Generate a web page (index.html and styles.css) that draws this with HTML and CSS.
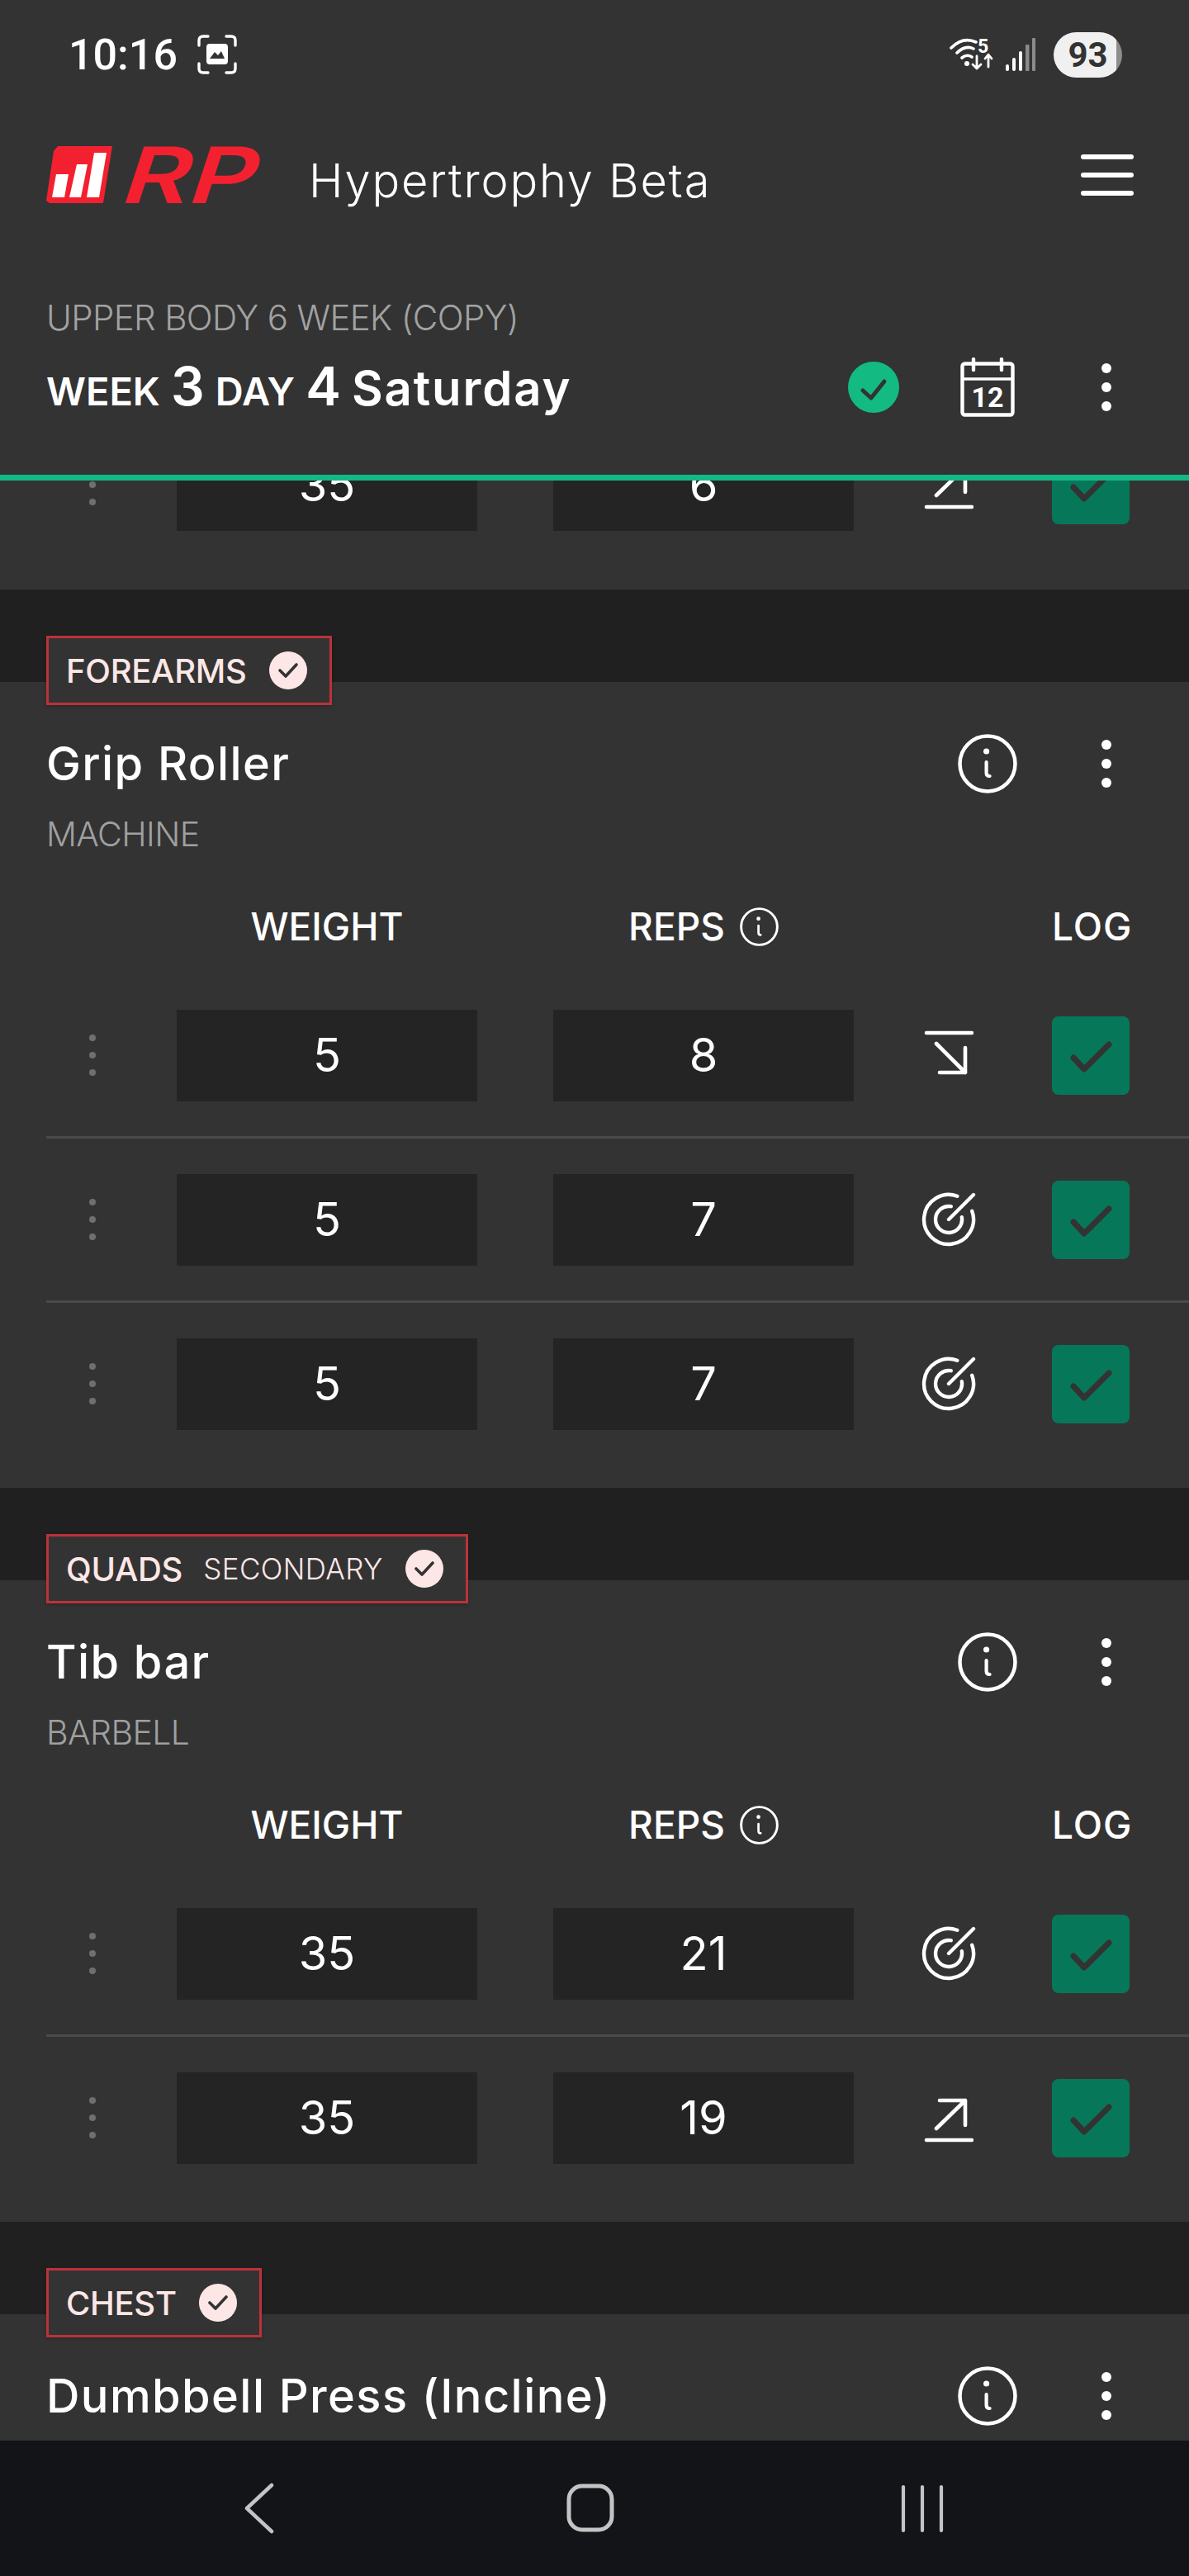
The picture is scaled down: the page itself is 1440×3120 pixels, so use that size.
FILE: index.html

```html
<!DOCTYPE html>
<html lang="en">
<head>
  <meta charset="UTF-8">
  <title>RP Hypertrophy Beta</title>
  <meta name="viewport" content="width=device-width, initial-scale=1">
  <link rel="stylesheet" href="styles.css">
</head>
<body>
  <svg class="defs" width="0" height="0">
    <symbol id="info" viewBox="0 0 72 72">
      <circle cx="36" cy="36" r="33.5" fill="none" stroke="currentColor" stroke-width="4.5"/>
      <circle cx="34.6" cy="21" r="3.6" fill="currentColor"/>
      <path d="M34.6 34V47Q34.6 51 38.6 51" fill="none" stroke="currentColor" stroke-width="4.2" stroke-linecap="round"/>
    </symbol>
    <symbol id="kebab" viewBox="0 0 14 60">
      <circle cx="7" cy="7" r="6" fill="currentColor"/>
      <circle cx="7" cy="30" r="6" fill="currentColor"/>
      <circle cx="7" cy="53" r="6" fill="currentColor"/>
    </symbol>
    <symbol id="grip" viewBox="0 0 10 52">
      <circle cx="5" cy="5" r="4" fill="currentColor"/>
      <circle cx="5" cy="26" r="4" fill="currentColor"/>
      <circle cx="5" cy="47" r="4" fill="currentColor"/>
    </symbol>
    <symbol id="trend-down" viewBox="0 0 60 64">
      <path d="M3 5H58M15 18L50 53M50 23V53H19" fill="none" stroke="currentColor" stroke-width="4.6" stroke-linecap="round" stroke-linejoin="round"/>
    </symbol>
    <symbol id="trend-up" viewBox="0 0 60 64">
      <path d="M3 59H58M15 45L50 11M50 41V11H19" fill="none" stroke="currentColor" stroke-width="4.6" stroke-linecap="round" stroke-linejoin="round"/>
    </symbol>
    <symbol id="target" viewBox="0 0 66 66">
      <path d="M61.2 22.7A30 30 0 1 1 43.3 4.8M48.8 30.2A16 16 0 1 1 35.8 17.2M33 33L63 3" fill="none" stroke="currentColor" stroke-width="4.4" stroke-linecap="round"/>
    </symbol>
    <symbol id="box-check" viewBox="0 0 94 95">
      <path d="M26 50L39 64L69 34" fill="none" stroke="currentColor" stroke-width="7" stroke-linecap="round" stroke-linejoin="round"/>
    </symbol>
    <symbol id="tag-check" viewBox="0 0 46 46">
      <circle cx="23" cy="23" r="23" fill="#fde7e6"/>
      <path d="M13 23L20 30L33 16" fill="none" stroke="#333" stroke-width="3.6" stroke-linecap="round" stroke-linejoin="round"/>
    </symbol>
  </svg>

  <div class="app">
    <header class="top">
      <div class="status">
        <div class="status-left">
          <span class="time">10:16</span>
          <svg class="shot" width="48" height="48" viewBox="0 0 48 48">
            <path d="M2 13V7Q2 2 7 2H13M35 2H41Q46 2 46 7V13M46 35V41Q46 46 41 46H35M13 46H7Q2 46 2 41V35" fill="none" stroke="#fff" stroke-width="3.4" stroke-linecap="round"/>
            <rect x="11" y="11" width="26" height="25" rx="4" fill="#fff"/>
            <path d="M15 29L21 21L25 25L29 20L33 29Z" fill="#333"/>
          </svg>
        </div>
        <div class="status-right">
          <svg width="54" height="60" viewBox="0 -10 54 60">
            <path d="M2 12Q16 -2 32 5M9 18Q19 8 29 13M15 24Q21 19 27 23" fill="none" stroke="#fff" stroke-width="3.6" stroke-linecap="round"/>
            <circle cx="21" cy="31" r="3" fill="#fff"/>
            <text x="34" y="18" class="wifi-five">5</text>
            <path d="M33 22V37M28 32L33 37L38 32M47 35V21M43 25L47 20L51 25" fill="none" stroke="#fff" stroke-width="2.8" stroke-linecap="round" stroke-linejoin="round"/>
          </svg>
          <svg class="signal" width="36" height="40" viewBox="0 0 36 40">
            <rect x="0" y="32" width="4" height="8" rx="2" fill="#fff"/>
            <rect x="8" y="24" width="4" height="16" rx="2" fill="#fff"/>
            <rect x="16" y="16" width="4" height="24" rx="2" fill="#fff"/>
            <rect x="24" y="8" width="4.5" height="32" rx="1" fill="#8b8b8b"/>
            <rect x="32" y="0" width="4" height="40" rx="1" fill="#8b8b8b"/>
          </svg>
          <span class="battery">93</span>
        </div>
      </div>

      <div class="brand">
        <div class="logo">
          <svg width="80" height="70" viewBox="0 0 80 70">
            <path d="M14 0H80L79 6L69 69H4L0 66L9 6Z" fill="#f3212f"/>
            <path d="M12 34H27L22 62H7ZM37 22H50L42 62H28ZM58 8H73L64 62H49Z" fill="#fff"/>
          </svg>
          <span class="logo-text">RP</span>
        </div>
        <span class="app-name">Hypertrophy Beta</span>
        <div class="menu"><i></i><i></i><i></i></div>
      </div>

      <div class="program">UPPER BODY 6 WEEK (COPY)</div>
      <div class="day-row">
        <div class="day-title">
          <span class="small">WEEK</span> <span class="big">3</span> <span class="small">DAY</span> <span class="big">4</span> <span class="weekday">Saturday</span>
        </div>
        <svg class="done" width="62" height="62" viewBox="0 0 62 62">
          <circle cx="31" cy="31" r="31" fill="#13bb82"/>
          <path d="M18 35L28 44L44 24" fill="none" stroke="#333" stroke-width="5" stroke-linecap="round" stroke-linejoin="round"/>
        </svg>
        <svg class="calendar" width="66" height="72" viewBox="0 0 66 72">
          <rect x="2.5" y="7.5" width="61" height="62" rx="3" fill="none" stroke="#fff" stroke-width="4.4"/>
          <path d="M2 26H64" stroke="#fff" stroke-width="3.6"/>
          <path d="M16 2V15M50 2V15" stroke="#fff" stroke-width="4.4" stroke-linecap="round"/>
          <text x="33" y="60" class="cal-num">12</text>
        </svg>
        <svg class="kebab" width="14" height="60"><use href="#kebab"/></svg>
      </div>
    </header>

    <main class="list">
      <section class="card card-cut">
        <div class="row row-cut">
          <svg class="grip" width="10" height="52"><use href="#grip"/></svg>
          <div class="cell">35</div>
          <div class="cell">6</div>
          <div class="trend"><svg width="60" height="64"><use href="#trend-up"/></svg></div>
          <div class="log"><svg width="94" height="95"><use href="#box-check"/></svg></div>
        </div>
      </section>

      <section class="group">
        <div class="tag"><span class="tag-name">FOREARMS</span><svg width="46" height="46"><use href="#tag-check"/></svg></div>
        <div class="card">
          <div class="ex-head">
            <h2 class="ex-name">Grip Roller</h2>
            <svg class="ex-info" width="72" height="72"><use href="#info"/></svg>
            <svg class="kebab" width="14" height="60"><use href="#kebab"/></svg>
          </div>
          <div class="ex-type">MACHINE</div>
          <div class="labels">
            <span class="lab-weight">WEIGHT</span>
            <span class="lab-reps">REPS <svg width="47" height="47"><use href="#info"/></svg></span>
            <span class="lab-log">LOG</span>
          </div>
          <div class="row line">
            <svg class="grip" width="10" height="52"><use href="#grip"/></svg>
            <div class="cell">5</div>
            <div class="cell">8</div>
            <div class="trend"><svg width="60" height="64"><use href="#trend-down"/></svg></div>
            <div class="log"><svg width="94" height="95"><use href="#box-check"/></svg></div>
          </div>
          <div class="row line">
            <svg class="grip" width="10" height="52"><use href="#grip"/></svg>
            <div class="cell">5</div>
            <div class="cell">7</div>
            <div class="trend"><svg width="66" height="66"><use href="#target"/></svg></div>
            <div class="log"><svg width="94" height="95"><use href="#box-check"/></svg></div>
          </div>
          <div class="row">
            <svg class="grip" width="10" height="52"><use href="#grip"/></svg>
            <div class="cell">5</div>
            <div class="cell">7</div>
            <div class="trend"><svg width="66" height="66"><use href="#target"/></svg></div>
            <div class="log"><svg width="94" height="95"><use href="#box-check"/></svg></div>
          </div>
        </div>
      </section>

      <section class="group">
        <div class="tag"><span class="tag-name">QUADS</span><span class="tag-sub">SECONDARY</span><svg width="46" height="46"><use href="#tag-check"/></svg></div>
        <div class="card">
          <div class="ex-head">
            <h2 class="ex-name">Tib bar</h2>
            <svg class="ex-info" width="72" height="72"><use href="#info"/></svg>
            <svg class="kebab" width="14" height="60"><use href="#kebab"/></svg>
          </div>
          <div class="ex-type">BARBELL</div>
          <div class="labels">
            <span class="lab-weight">WEIGHT</span>
            <span class="lab-reps">REPS <svg width="47" height="47"><use href="#info"/></svg></span>
            <span class="lab-log">LOG</span>
          </div>
          <div class="row line">
            <svg class="grip" width="10" height="52"><use href="#grip"/></svg>
            <div class="cell">35</div>
            <div class="cell">21</div>
            <div class="trend"><svg width="66" height="66"><use href="#target"/></svg></div>
            <div class="log"><svg width="94" height="95"><use href="#box-check"/></svg></div>
          </div>
          <div class="row">
            <svg class="grip" width="10" height="52"><use href="#grip"/></svg>
            <div class="cell">35</div>
            <div class="cell">19</div>
            <div class="trend"><svg width="60" height="64"><use href="#trend-up"/></svg></div>
            <div class="log"><svg width="94" height="95"><use href="#box-check"/></svg></div>
          </div>
        </div>
      </section>

      <section class="group">
        <div class="tag"><span class="tag-name">CHEST</span><svg width="46" height="46"><use href="#tag-check"/></svg></div>
        <div class="card">
          <div class="ex-head">
            <h2 class="ex-name">Dumbbell Press (Incline)</h2>
            <svg class="ex-info" width="72" height="72"><use href="#info"/></svg>
            <svg class="kebab" width="14" height="60"><use href="#kebab"/></svg>
          </div>
        </div>
      </section>
    </main>

    <nav class="nav">
      <svg width="60" height="64" viewBox="0 0 60 64">
        <path d="M46 4L16 32L46 60" fill="none" stroke="currentColor" stroke-width="4.5" stroke-linecap="round" stroke-linejoin="round"/>
      </svg>
      <svg width="60" height="64" viewBox="0 0 60 64">
        <rect x="4" y="5" width="52" height="53" rx="16" fill="none" stroke="currentColor" stroke-width="5"/>
      </svg>
      <svg width="60" height="64" viewBox="0 0 60 64">
        <path d="M7 6V59M30 6V59M53 6V59" fill="none" stroke="currentColor" stroke-width="4.2" stroke-linecap="round"/>
      </svg>
    </nav>
  </div>
</body>
</html>
```

FILE: styles.css

```css
* {
  box-sizing: border-box;
}
body {
  margin: 0;
  background: #202020;
  font-family: Inter, "Noto Sans", sans-serif;
  color: #fff;
}
svg {
  display: block;
  flex: none;
}
.defs {
  position: absolute;
}
.app {
  display: flex;
  flex-direction: column;
  height: 3120px;
  overflow: hidden;
}

/* top bar */
.top {
  flex: none;
  height: 582px;
  padding: 0 56px;
  background: #333;
  border-bottom: 7px solid #14b885;
}
.status {
  display: flex;
  align-items: center;
  justify-content: space-between;
  height: 132px;
  margin: 0 -56px;
  padding: 0 81px 0 83px;
}
.status-left {
  display: flex;
  align-items: center;
  gap: 24px;
}
.time {
  font-family: Roboto, sans-serif;
  font-size: 52px;
  font-weight: 500;
}
.status-right {
  display: flex;
  align-items: center;
  gap: 14px;
}
.signal {
  margin-right: 8px;
}
.wifi-five {
  font-family: Roboto, sans-serif;
  font-size: 23px;
  font-weight: 700;
  fill: #fff;
}
.battery {
  width: 83px;
  height: 55px;
  border-radius: 28px;
  background: linear-gradient(to right, #f0f0f0 92%, #8d8d8d 92%);
  color: #333;
  font-family: Roboto, sans-serif;
  font-size: 42px;
  font-weight: 700;
  line-height: 55px;
  text-align: center;
}
.brand {
  display: flex;
  align-items: center;
  height: 160px;
}
.logo {
  display: flex;
  align-items: center;
  width: 318px;
  height: 70px;
}
.logo-text {
  width: 120px;
  margin-left: 18px;
  color: #f3212f;
  font-size: 94px;
  font-weight: 600;
  line-height: 70px;
  transform: scaleX(1.32) skewX(-14deg);
  transform-origin: left center;
}
.app-name {
  margin-top: 14px;
  font-size: 56px;
  font-weight: 300;
  letter-spacing: 1.8px;
}
.menu {
  display: flex;
  flex-direction: column;
  gap: 16px;
  width: 64px;
  margin-left: auto;
  margin-right: 11px;
}
.menu i {
  height: 6px;
  border-radius: 3px;
  background: #fff;
}
.program {
  margin-top: 63px;
  color: #a2a2a2;
  font-size: 42px;
  font-weight: 300;
  letter-spacing: -0.65px;
  line-height: 60px;
}
.day-row {
  display: flex;
  align-items: center;
  height: 80px;
  margin-top: 14px;
}
.day-title {
  flex: 1;
  margin-bottom: 4px;
  font-size: 52px;
  font-weight: 600;
  white-space: nowrap;
}
.day-title .small {
  font-size: 47px;
}
.day-title .big {
  font-size: 64px;
  font-weight: 600;
}
.day-title .weekday {
  font-size: 58px;
  letter-spacing: 1.9px;
}
.cal-num {
  font-family: Roboto, sans-serif;
  font-size: 34px;
  font-weight: 700;
  fill: #fff;
  text-anchor: middle;
}
.done {
  margin-right: 74px;
}
.calendar {
  margin-right: 104px;
}
.kebab {
  color: #fff;
  margin-right: 37px;
}

/* exercise list */
.list {
  flex: 1;
  min-height: 0;
  overflow: hidden;
}
.group {
  padding-top: 56px;
}
.card {
  background: #333;
  padding: 62px 0 25px;
}
.card-cut {
  height: 132px;
  overflow: hidden;
  padding: 0;
}
.row-cut {
  margin-top: -93px;
}
.tag {
  position: relative;
  display: flex;
  align-items: center;
  width: fit-content;
  height: 84px;
  margin: 0 0 -28px 56px;
  padding: 0 27px 0 21px;
  background: #333;
  border: 3px solid #bb323a;
  box-shadow: 0 2px 4px rgba(0, 0, 0, 0.2);
  color: #fde7e6;
}
.tag-name {
  margin-right: 27px;
  font-size: 40px;
  font-weight: 500;
  letter-spacing: -0.3px;
}
.tag-sub {
  margin: 0 27px 0 -2px;
  font-size: 35px;
  font-weight: 300;
  letter-spacing: 0.4px;
}
.ex-head {
  display: flex;
  align-items: center;
  height: 74px;
  margin-left: 56px;
}
.ex-name {
  flex: 1;
  margin: 0;
  font-size: 56px;
  font-weight: 500;
  letter-spacing: 1.4px;
}
.ex-info {
  margin-right: 101px;
}
.ex-head .kebab {
  margin-right: 93px;
}
.ex-type {
  margin: 23px 0 0 56px;
  color: #a0a0a0;
  font-size: 41px;
  font-weight: 300;
  letter-spacing: -0.6px;
  line-height: 50px;
}
.labels {
  display: flex;
  align-items: center;
  height: 60px;
  margin: 57px 0 28px 0;
  padding-left: 214px;
  font-size: 46px;
  font-weight: 500;
}
.lab-weight {
  width: 364px;
  text-align: center;
}
.lab-reps {
  display: flex;
  align-items: center;
  justify-content: center;
  gap: 18px;
  width: 364px;
  margin-left: 92px;
}
.lab-log {
  width: 94px;
  margin-left: 240px;
  letter-spacing: 1px;
  text-align: center;
}
.row {
  display: flex;
  align-items: center;
  height: 199px;
  margin-left: 56px;
  padding-bottom: 3px;
}
.row.line {
  padding-bottom: 0;
  border-bottom: 3px solid #4a4a4a;
}
.grip {
  width: 10px;
  margin: 0 97px 0 51px;
  color: #6f6f6f;
}
.cell {
  width: 364px;
  height: 111px;
  background: #242424;
  font-size: 56px;
  line-height: 111px;
  text-align: center;
}
.cell + .cell {
  margin-left: 92px;
}
.trend {
  display: flex;
  justify-content: center;
  width: 230px;
}
.log {
  width: 94px;
  height: 95px;
  margin-left: 10px;
  border-radius: 8px;
  background: #07775a;
  color: #333;
}

/* android buttons */
.nav {
  flex: none;
  display: flex;
  align-items: center;
  justify-content: center;
  gap: 342px;
  height: 164px;
  padding-right: 10px;
  background: #121418;
  color: #c4c4c4;
}
```
